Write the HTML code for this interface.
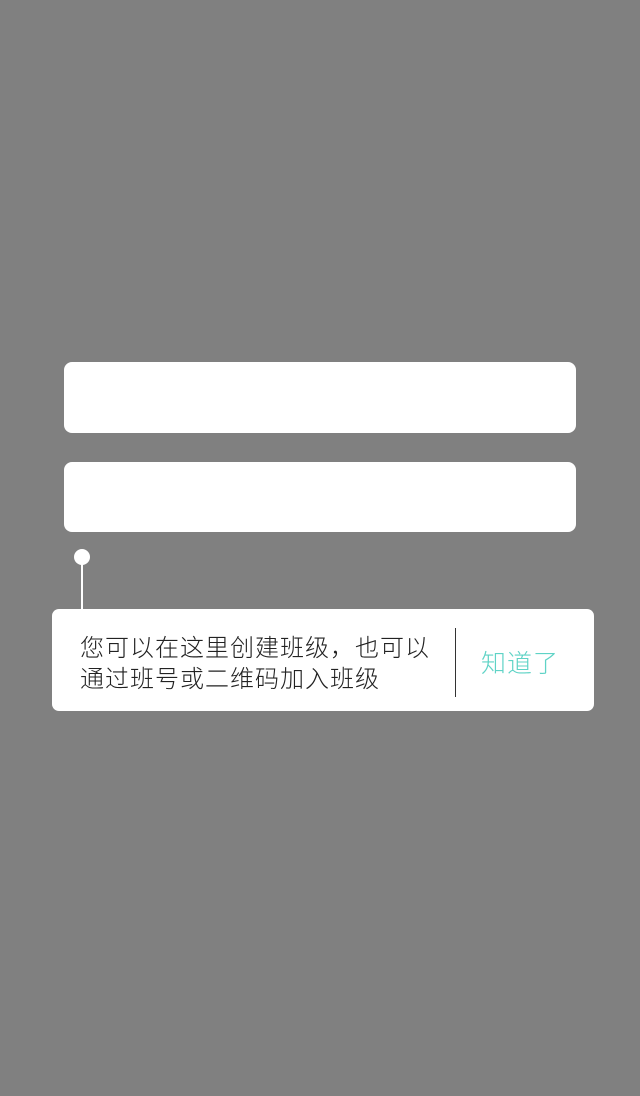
<!DOCTYPE html>
<html><head><meta charset="utf-8"><style>
html,body{margin:0;padding:0}
body{width:640px;height:1096px;background:#808080;position:relative;overflow:hidden;font-family:"Liberation Sans","Noto Sans CJK SC",sans-serif}
.in{position:absolute;left:64px;width:512px;background:#fff;border-radius:8px}
.dot{position:absolute;left:74px;top:549px;width:16px;height:16px;border-radius:50%;background:#fff}
.ln{position:absolute;left:81px;top:560px;width:2px;height:50px;background:#fff}
.box{position:absolute;left:52px;top:609px;width:542px;height:102px;background:#fff;border-radius:7px}
.t{position:absolute;left:28px;top:24px;font-size:24px;line-height:31px;color:#222;font-weight:300;letter-spacing:1px;white-space:nowrap}
.dv{position:absolute;left:403px;top:19px;width:1px;height:69px;background:#333}
.k{position:absolute;left:429px;top:40px;font-size:25px;line-height:30px;color:#5fd3c6;font-weight:300;letter-spacing:1px}
</style></head><body>
<div class="in" style="top:362px;height:71px"></div>
<div class="in" style="top:462px;height:70px"></div>
<div class="ln"></div><div class="dot"></div>
<div class="box">
<div class="t">您可以在这里创建班级，也可以<br>通过班号或二维码加入班级</div>
<div class="dv"></div>
<div class="k">知道了</div>
</div>
</body></html>
